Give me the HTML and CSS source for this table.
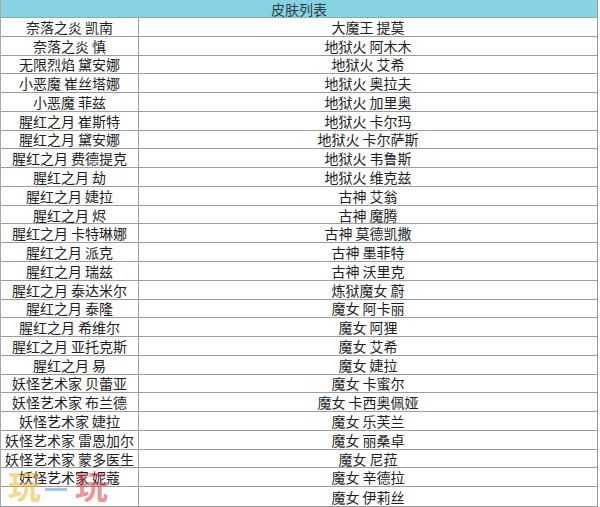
FILE: index.html
```html
<!DOCTYPE html>
<html lang="zh-CN">
<head>
<meta charset="utf-8">
<title>皮肤列表</title>
<link rel="stylesheet" href="styles.css">
</head>
<body>
<div class="page">
  <div class="table">
    <div class="head">皮肤列表</div>
    <div class="c l">奈落之炎 凯南</div><div class="c r">大魔王 提莫</div>
    <div class="c l">奈落之炎 慎</div><div class="c r">地狱火 阿木木</div>
    <div class="c l">无限烈焰 黛安娜</div><div class="c r">地狱火 艾希</div>
    <div class="c l">小恶魔 崔丝塔娜</div><div class="c r">地狱火 奥拉夫</div>
    <div class="c l">小恶魔 菲兹</div><div class="c r">地狱火 加里奥</div>
    <div class="c l">腥红之月 崔斯特</div><div class="c r">地狱火 卡尔玛</div>
    <div class="c l">腥红之月 黛安娜</div><div class="c r">地狱火 卡尔萨斯</div>
    <div class="c l">腥红之月 费德提克</div><div class="c r">地狱火 韦鲁斯</div>
    <div class="c l">腥红之月 劫</div><div class="c r">地狱火 维克兹</div>
    <div class="c l">腥红之月 婕拉</div><div class="c r">古神 艾翁</div>
    <div class="c l">腥红之月 烬</div><div class="c r">古神 魔腾</div>
    <div class="c l">腥红之月 卡特琳娜</div><div class="c r">古神 莫德凯撒</div>
    <div class="c l">腥红之月 派克</div><div class="c r">古神 墨菲特</div>
    <div class="c l">腥红之月 瑞兹</div><div class="c r">古神 沃里克</div>
    <div class="c l">腥红之月 泰达米尔</div><div class="c r">炼狱魔女 蔚</div>
    <div class="c l">腥红之月 泰隆</div><div class="c r">魔女 阿卡丽</div>
    <div class="c l">腥红之月 希维尔</div><div class="c r">魔女 阿狸</div>
    <div class="c l">腥红之月 亚托克斯</div><div class="c r">魔女 艾希</div>
    <div class="c l">腥红之月 易</div><div class="c r">魔女 婕拉</div>
    <div class="c l">妖怪艺术家 贝蕾亚</div><div class="c r">魔女 卡蜜尔</div>
    <div class="c l">妖怪艺术家 布兰德</div><div class="c r">魔女 卡西奥佩娅</div>
    <div class="c l">妖怪艺术家 婕拉</div><div class="c r">魔女 乐芙兰</div>
    <div class="c l">妖怪艺术家 雷恩加尔</div><div class="c r">魔女 丽桑卓</div>
    <div class="c l">妖怪艺术家 蒙多医生</div><div class="c r">魔女 尼菈</div>
    <div class="c l">妖怪艺术家 妮蔻</div><div class="c r">魔女 辛德拉</div>
    <div class="c l"></div><div class="c r">魔女 伊莉丝</div>
  </div>
  <div class="mark"><span class="m1">玩</span><span class="dash"></span><span class="m2">玩</span></div>
</div>
</body>
</html>
```
FILE: styles.css
```css
html, body {
  margin: 0;
  padding: 0;
  background: #ffffff;
}
.page {
  position: relative;
  width: 600px;
  height: 507px;
  overflow: hidden;
}
.table {
  width: 598px;
  height: 507px;
  box-sizing: border-box;
  display: grid;
  grid-template-columns: 138px 1fr;
  grid-template-rows: 18px repeat(26, 1fr);
  border-left: 1px solid #a8a8a8;
  border-right: 1px solid #9a9a9a;
  border-bottom: 1px solid #9a9a9a;
  font-family: "Noto Sans CJK SC", "Noto Sans", sans-serif;
  font-size: 14px;
  color: #1e1e1e;
}
.head {
  grid-column: 1 / 3;
  background: #88d3e3;
  color: #2c3e45;
  display: flex;
  align-items: center;
  justify-content: center;
  line-height: 1;
  border-bottom: 1px solid #9aa6aa;
  box-sizing: border-box;
}
.c {
  display: flex;
  align-items: center;
  justify-content: center;
  border-bottom: 1px solid #9d9d9d;
  line-height: 1;
  white-space: nowrap;
  box-sizing: border-box;
}
.c:nth-last-child(-n+2) {
  border-bottom: none;
}
.l {
  border-right: 1px solid #9d9d9d;
}
.mark {
  position: absolute;
  left: 8px;
  top: 470px;
  display: flex;
  align-items: center;
  gap: 4px;
  font-family: "Liberation Serif", "Noto Sans CJK SC", serif;
  font-weight: bold;
  font-size: 33px;
  line-height: 36px;
  opacity: 0.5;
  pointer-events: none;
}
.m1 {
  color: #e8b420;
}
.m2 {
  color: #d8303a;
  margin-left: 4px;
}
.dash {
  width: 22px;
  height: 3px;
  background: #3b8fd6;
  margin-top: 2px;
}
```
